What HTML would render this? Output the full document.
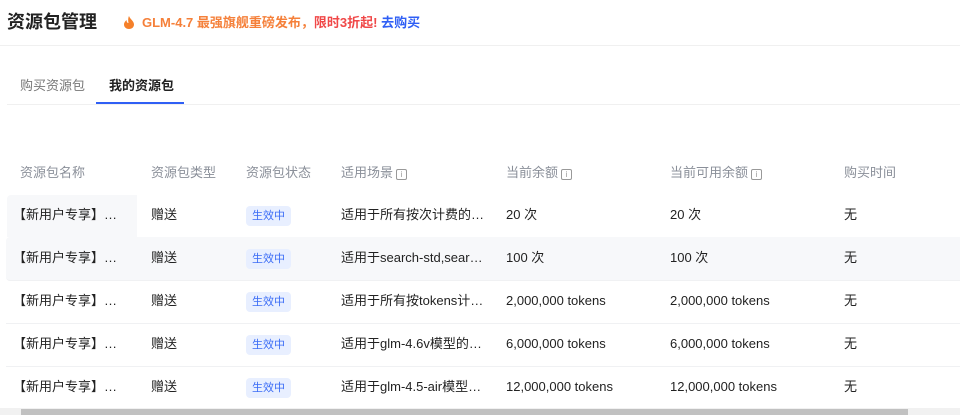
<html><head><style>
body{margin:0;width:960px;height:415px;overflow:hidden;background:#fff;font-family:"Liberation Sans","Noto Sans CJK SC",sans-serif;position:relative}
.a{position:absolute;white-space:nowrap;line-height:16px}
.h{font-size:13px;color:#8a8f99}
.c{font-size:13px;color:#222}
.tag{position:absolute;left:246px;width:45px;height:20px;background:#e8efff;color:#3b6cf6;font-size:11px;border-radius:4px;text-align:center;line-height:20px}
.i{display:inline-block;width:9px;height:9px;border:1px solid #999;border-radius:2px;font-size:8px;line-height:9px;text-align:center;color:#999;vertical-align:0;margin-left:3px}
.row{position:absolute;left:6px;width:954px;height:43px;border-bottom:1px solid #f0f1f3}
</style></head><body>
<div class="a" style="left:7px;top:12px;font-size:18px;line-height:20px;font-weight:bold;color:#222">资源包管理</div>
<svg class="a" style="left:124px;top:16px" width="10" height="13" viewBox="0 0 10 13"><path d="M5 0C6 3 10 5 10 8.5 10 11 8 13 5 13 2 13 0 11 0 8.5 0 6.5 1.5 5 2.5 4 2.5 6 3.5 7 4.5 7 4 5 4 2 5 0Z" fill="#f5802a"/></svg>
<div class="a" style="left:142px;top:15px;font-size:13px;font-weight:bold;color:#f5803a">GLM-4.7 最强旗舰重磅发布，<span style="color:#f04848">限时3折起!</span> <span style="color:#2f5ff5">去购买</span></div>
<div class="a" style="left:0;top:45px;width:960px;height:1px;background:#f0f0f0"></div>
<div class="a" style="left:20px;top:78px;font-size:13px;color:#777">购买资源包</div>
<div class="a" style="left:109px;top:78px;font-size:13px;font-weight:bold;color:#222">我的资源包</div>
<div class="a" style="left:7px;top:104px;width:953px;height:1px;background:#f0f0f0"></div>
<div class="a" style="left:96px;top:102px;width:88px;height:2px;background:#2f5ff5"></div>
<div class="a h" style="left:20px;top:165px">资源包名称</div>
<div class="a h" style="left:151px;top:165px">资源包类型</div>
<div class="a h" style="left:246px;top:165px">资源包状态</div>
<div class="a h" style="left:341px;top:165px">适用场景<span class="i">i</span></div>
<div class="a h" style="left:506px;top:165px">当前余额<span class="i">i</span></div>
<div class="a h" style="left:670px;top:165px">当前可用余额<span class="i">i</span></div>
<div class="a h" style="left:844px;top:165px">购买时间</div>

<div class="a" style="left:7px;top:195px;width:130px;height:42px;background:#f7f8fa;border-radius:4px 0 0 0"></div>
<div class="row" style="top:237px;background:#f7f8fa;border-radius:4px 0 0 4px"></div>
<div class="row" style="top:280px"></div>
<div class="row" style="top:323px"></div>

<div class="a c" style="left:13px;top:207px">【新用户专享】…</div><div class="a c" style="left:151px;top:207px">赠送</div><div class="tag" style="top:206px">生效中</div><div class="a c" style="left:341px;top:207px">适用于所有按次计费的…</div><div class="a c" style="left:506px;top:207px">20 次</div><div class="a c" style="left:670px;top:207px">20 次</div><div class="a c" style="left:844px;top:207px">无</div>
<div class="a c" style="left:13px;top:250px">【新用户专享】…</div><div class="a c" style="left:151px;top:250px">赠送</div><div class="tag" style="top:249px">生效中</div><div class="a c" style="left:341px;top:250px">适用于search-std,sear…</div><div class="a c" style="left:506px;top:250px">100 次</div><div class="a c" style="left:670px;top:250px">100 次</div><div class="a c" style="left:844px;top:250px">无</div>
<div class="a c" style="left:13px;top:293px">【新用户专享】…</div><div class="a c" style="left:151px;top:293px">赠送</div><div class="tag" style="top:292px">生效中</div><div class="a c" style="left:341px;top:293px">适用于所有按tokens计…</div><div class="a c" style="left:506px;top:293px">2,000,000 tokens</div><div class="a c" style="left:670px;top:293px">2,000,000 tokens</div><div class="a c" style="left:844px;top:293px">无</div>
<div class="a c" style="left:13px;top:336px">【新用户专享】…</div><div class="a c" style="left:151px;top:336px">赠送</div><div class="tag" style="top:335px">生效中</div><div class="a c" style="left:341px;top:336px">适用于glm-4.6v模型的…</div><div class="a c" style="left:506px;top:336px">6,000,000 tokens</div><div class="a c" style="left:670px;top:336px">6,000,000 tokens</div><div class="a c" style="left:844px;top:336px">无</div>
<div class="a c" style="left:13px;top:379px">【新用户专享】…</div><div class="a c" style="left:151px;top:379px">赠送</div><div class="tag" style="top:378px">生效中</div><div class="a c" style="left:341px;top:379px">适用于glm-4.5-air模型…</div><div class="a c" style="left:506px;top:379px">12,000,000 tokens</div><div class="a c" style="left:670px;top:379px">12,000,000 tokens</div><div class="a c" style="left:844px;top:379px">无</div>

<div class="a" style="left:0;top:408px;width:960px;height:7px;background:#f1f1f1"></div>
<div class="a" style="left:21px;top:409px;width:887px;height:6px;background:#c1c1c1"></div>
</body></html>
